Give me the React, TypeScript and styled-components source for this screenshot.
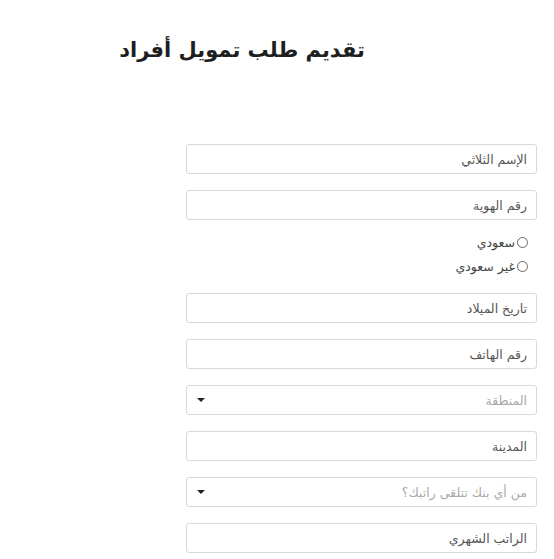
import styled, { createGlobalStyle } from 'styled-components';

const GlobalStyle = createGlobalStyle`
  html, body {
    margin: 0;
    padding: 0;
    background: #ffffff;
  }
  body {
    font-family: "DejaVu Sans", "Noto Sans", sans-serif;
    color: #333;
  }
`;

type Field = {
  label: string;
  select?: boolean;
};

const topFields: Field[] = [{ label: 'الإسم الثلاثي' }, { label: 'رقم الهوية' }];

const bottomFields: Field[] = [
  { label: 'تاريخ الميلاد' },
  { label: 'رقم الهاتف' },
  { label: 'المنطقة', select: true },
  { label: 'المدينة' },
  { label: 'من أي بنك تتلقى راتبك؟', select: true },
  { label: 'الراتب الشهري' },
];

const nationalities = ['سعودي', 'غير سعودي'];

const App = () => {
  return (
    <Page dir="rtl">
      <GlobalStyle />
      <Header>
        <Title>تقديم طلب تمويل أفراد</Title>
      </Header>
      <Form>
        {topFields.map((f) => (
          <Box key={f.label}>
            <BoxText>{f.label}</BoxText>
          </Box>
        ))}
        <RadioGroup>
          {nationalities.map((n) => (
            <RadioRow key={n}>
              <RadioDot />
              <RadioLabel>{n}</RadioLabel>
            </RadioRow>
          ))}
        </RadioGroup>
        {bottomFields.map((f) => (
          <Box key={f.label}>
            <BoxText $muted={f.select}>{f.label}</BoxText>
            {f.select && <Caret />}
          </Box>
        ))}
      </Form>
    </Page>
  );
};

// Styled Components
const Page = styled.div`
  width: 554px;
  min-height: 559px;
  overflow: hidden;
`;

const Header = styled.header`
  padding: 34px 189px 0 0;
  height: 110px;
  box-sizing: border-box;
`;

const Title = styled.h1`
  margin: 0;
  font-size: 21px;
  font-weight: 700;
  color: #1e1e1e;
  line-height: 32px;
`;

const Form = styled.div`
  display: flex;
  flex-direction: column;
  gap: 16px;
  width: 351px;
  margin-right: 17px;
  padding-top: 34px;
`;

const Box = styled.div`
  height: 30px;
  box-sizing: border-box;
  border: 1px solid #d8d8d8;
  border-radius: 3px;
  display: flex;
  align-items: center;
  justify-content: space-between;
  padding: 0 9px 0 10px;
  background: #fff;
`;

const BoxText = styled.span<{ $muted?: boolean }>`
  font-size: 12.5px;
  color: ${(p) => (p.$muted ? '#a9a9a9' : '#555')};
`;

const Caret = styled.span`
  width: 0;
  height: 0;
  border-left: 4px solid transparent;
  border-right: 4px solid transparent;
  border-top: 4px solid #222;
`;

const RadioGroup = styled.div`
  display: flex;
  flex-direction: column;
  gap: 4px;
  margin-top: -4px;
  padding: 0 9px 1px 0;
`;

const RadioRow = styled.label`
  display: flex;
  align-items: center;
  gap: 2px;
  height: 20px;
`;

const RadioDot = styled.span`
  width: 9px;
  height: 9px;
  border: 1px solid #666;
  border-radius: 50%;
`;

const RadioLabel = styled.span`
  font-size: 12.5px;
  color: #444;
`;

export default App;
